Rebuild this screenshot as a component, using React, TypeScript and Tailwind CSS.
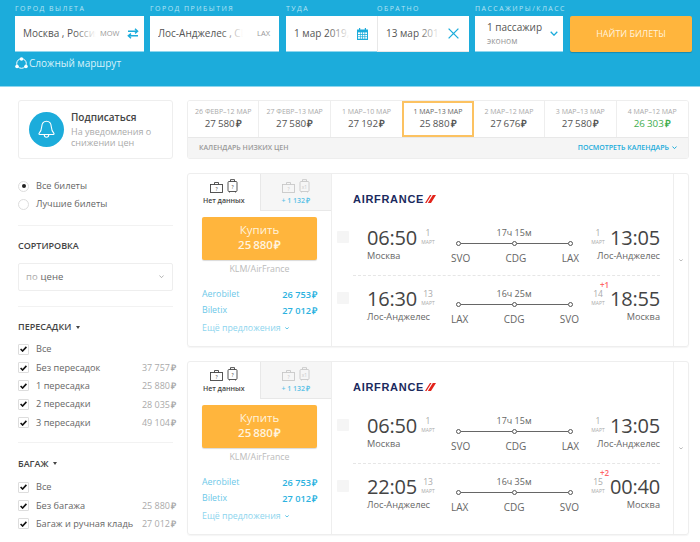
import React from "react";

const Fade = () => <span className="absolute right-0 top-0 bottom-0 w-[22px] bg-gradient-to-r from-white/0 to-white" />;

const Field = ({ label, w, children, className = "", inner = "" }: { label: string; w: string; children: React.ReactNode; className?: string; inner?: string }) => (
  <div className={`flex flex-col ${w} ${className}`}>
    <div className="h-[16px] text-[7px] leading-[17px] tracking-[1.45px] text-[#b5e3f3] whitespace-nowrap">{label}</div>
    <div className={`h-[36px] bg-white border-b border-[#8fd6ee] flex items-center relative ${inner}`}>{children}</div>
  </div>
);

const Swap = () => (
  <svg width="12" height="11" viewBox="0 0 12 11" fill="none" stroke="#1cacdb" strokeWidth="1.4">
    <path d="M1 3.2h9.5M8 .8l2.6 2.4L8 5.4" />
    <path d="M11 7.8H1.500M4 5.600 1.300 7.800 4 10.200" />
  </svg>
);

const Cal = () => (
  <svg width="11" height="12" viewBox="0 0 11 12" fill="#1cacdb">
    <path d="M2 0h1.2v1.5H7.8V0H9v1.5h2V12H0V1.5h2z" />
    <g fill="#fff">
      <rect x="1" y="4.400" width="2" height="1.600" /><rect x="3.600" y="4.400" width="1.600" height="1.600" /><rect x="5.900" y="4.400" width="1.600" height="1.600" /><rect x="8.200" y="4.400" width="1.800" height="1.600" />
      <rect x="1" y="6.800" width="2" height="1.600" /><rect x="3.600" y="6.800" width="1.600" height="1.600" /><rect x="5.900" y="6.800" width="1.600" height="1.600" /><rect x="8.200" y="6.800" width="1.800" height="1.600" />
      <rect x="1" y="9.100" width="2" height="1.600" /><rect x="3.600" y="9.100" width="1.600" height="1.600" /><rect x="5.900" y="9.100" width="1.600" height="1.600" /><rect x="8.200" y="9.100" width="1.800" height="1.600" />
    </g>
  </svg>
);

const Chevron = ({ w = 8, color = "#1cacdb", sw = 1.3 }: { w?: number; color?: string; sw?: number }) => (
  <svg width={w} height={w * 0.65} viewBox="0 0 8 5.2" fill="none" stroke={color} strokeWidth={sw}><path d="M.7.8 4 4.200 7.300.8" /></svg>
);

const Header = () => (
  <div className="h-[87px] bg-[#1cacdb] border-b border-[#8fd6ee] pl-[15px]">
    <div className="flex">
      <Field label="ГОРОД ВЫЛЕТА" w="w-[129px]" className="mr-[6px]">
        <div className="relative w-[73px] ml-[8px] overflow-hidden whitespace-nowrap text-[10px] text-[#555]">Москва , Россия<Fade /></div>
        <span className="text-[7.500px] text-[#999] ml-[4px] w-[20px]">MOW</span>
        <span className="ml-[7px]"><Swap /></span>
      </Field>
      <Field label="ГОРОД ПРИБЫТИЯ" w="w-[129px]" className="mr-[7px]">
        <div className="relative w-[85px] ml-[8px] overflow-hidden whitespace-nowrap text-[10px] text-[#555]">Лос-Анджелес , США<Fade /></div>
        <span className="text-[7.500px] text-[#999] ml-[14px]">LAX</span>
      </Field>
      <Field label="ТУДА" w="w-[91px]">
        <div className="relative w-[56px] ml-[8px] overflow-hidden whitespace-nowrap text-[10px] text-[#555]">1 мар 2019, пт<Fade /></div>
        <span className="ml-[7px]"><Cal /></span>
      </Field>
      <Field label="ОБРАТНО" w="w-[92px]" className="mr-[6px]" inner="border-l border-[#e8e8e8]">
        <div className="relative w-[54px] ml-[8px] overflow-hidden whitespace-nowrap text-[10px] text-[#555]">13 мар 2019, ср<Fade /></div>
        <svg className="ml-[8px]" width="11" height="11" viewBox="0 0 11 11" fill="none" stroke="#1cacdb" strokeWidth="1.3"><path d="m.6.6 9.8 9.8M10.400.6.6 10.400" /></svg>
      </Field>
      <Field label="ПАССАЖИРЫ/КЛАСС" w="w-[88px]" className="mr-[7px]">
        <div className="ml-[12px] flex flex-col">
          <span className="text-[10px] leading-[14px] text-[#555] whitespace-nowrap">1 пассажир</span>
          <span className="text-[8.500px] leading-[14px] text-[#999]">эконом</span>
        </div>
        <span className="ml-auto mr-[5px]"><Chevron /></span>
      </Field>
      <div className="pt-[16px]">
        <div className="w-[122px] h-[36px] rounded-[2px] bg-[#ffb53d] shadow-[0_1px_1px_rgba(0,0,0,0.2)] flex items-center justify-center text-[9px] text-[#fff3de]">НАЙТИ БИЛЕТЫ</div>
      </div>
    </div>
    <div className="flex items-center mt-[3px] text-[10px] leading-[16px] text-[#d9f2fa] whitespace-nowrap">
      <svg width="13" height="12" viewBox="0 0 13 12" fill="none" stroke="#fff" className="mr-[1px]">
        <circle cx="6.500" cy="6.500" r="4.800" strokeWidth="1" />
        <circle cx="6.500" cy="2" r="1.800" fill="#fff" stroke="none" /><circle cx="2" cy="9.500" r="1.800" fill="#fff" stroke="none" /><circle cx="11" cy="9.500" r="1.800" fill="#fff" stroke="none" />
      </svg>
      Сложный маршрут
    </div>
  </div>
);

const Rub = ({ className = "" }: { className?: string }) => <span className={`font-semibold ml-[1px] ${className}`}>₽</span>;

const cells = [
  ["26 ФЕВР–12 МАР", "27 580"],
  ["27 ФЕВР–13 МАР", "27 580"],
  ["1 МАР–10 МАР", "27 192"],
  ["1 МАР–13 МАР", "25 880"],
  ["2 МАР–12 МАР", "27 676"],
  ["3 МАР–13 МАР", "27 580"],
  ["4 МАР–12 МАР", "26 303"],
];

const Calendar = () => (
  <div className="w-[502px] h-[59px] border border-[#eeeeee] rounded-[3px] overflow-hidden flex flex-col">
    <div className="h-[36px] flex bg-white">
      {cells.map(([d, p], i) => (
        <div key={i} className={`w-[71.430px] shrink-0 h-full flex flex-col items-center ${i === 3 ? "border-2 border-[#fcc261] pt-[4px]" : i < 6 && i !== 2 ? "border-r border-[#eeeeee] pt-[6px]" : "pt-[6px]"}`}>
          <span className={`text-[7px] leading-[10px] whitespace-nowrap ${i === 3 ? "text-[#666]" : "text-[#aaa]"}`}>{d}</span>
          <span className={`text-[9.800px] leading-[13px] whitespace-nowrap [word-spacing:-0.5px] ${i === 6 ? "text-[#3fae4f]" : "text-[#555]"}`}>{p}<Rub /></span>
        </div>
      ))}
    </div>
    <div className="flex-1 bg-[#f5f5f5] border-t border-[#e8e8e8] flex items-center justify-between px-[11px] text-[7px] font-semibold">
      <span className="text-[#999]">КАЛЕНДАРЬ НИЗКИХ ЦЕН</span>
      <span className="text-[#1cacdb] flex items-center gap-[3px]">ПОСМОТРЕТЬ КАЛЕНДАРЬ <Chevron w={5} sw={1.6} /></span>
    </div>
  </div>
);

const Radio = ({ on, label }: { on?: boolean; label: string }) => (
  <div className="flex items-center h-[18px]">
    <span className="w-[11px] h-[11px] rounded-full border border-[#ddd] flex items-center justify-center mr-[7px]">
      {on && <span className="w-[4px] h-[4px] rounded-full bg-[#222]" />}
    </span>
    <span className="text-[9.200px] text-[#666]">{label}</span>
  </div>
);

const Check = ({ label, price }: { label: string; price?: string }) => (
  <div className="flex items-center h-[18.400px] w-[158px] whitespace-nowrap">
    <span className="w-[11px] h-[11px] rounded-[1px] border border-[#ddd] flex items-center justify-center mr-[7px]">
      <svg width="7" height="6" viewBox="0 0 7 6" fill="none" stroke="#111" strokeWidth="1.6"><path d="M.6 3 2.600 5 6.400.9" /></svg>
    </span>
    <span className="text-[9.200px] text-[#666]">{label}</span>
    {price && <span className="ml-auto text-[9px] text-[#aaa]">{price}<Rub className="font-normal" /></span>}
  </div>
);

const SecTitle = ({ children }: { children: React.ReactNode }) => (
  <div className="flex items-center text-[9px] font-semibold text-[#444] h-[14px]">{children}</div>
);

const Tri = () => <span className="ml-[5px] w-0 h-0 border-l-[2.500px] border-r-[2.500px] border-t-[3px] border-l-transparent border-r-transparent border-t-[#444]" />;

const Sidebar = () => (
  <div className="w-[155px] flex flex-col">
    <div className="h-[59px] border border-[#eeeeee] rounded-[3px] flex items-center pl-[10px]">
      <span className="w-[35px] h-[35px] rounded-full bg-[#1cacdb] flex items-center justify-center mr-[7px] shrink-0">
        <svg width="17" height="19" viewBox="0 0 17 19" fill="none" stroke="#fff" strokeWidth="1.1">
          <path d="M8.500 1.200c3.200 0 4.600 2.500 4.800 5.500.2 3 .9 4.800 2.600 6.600.4.5.1 1.200-.5 1.200H1.600c-.6 0-.9-.7-.5-1.200 1.700-1.800 2.400-3.600 2.600-6.600.2-3 1.600-5.500 4.800-5.500Z" />
          <path d="M6.300 15c0 3 4.400 3 4.400 0" />
        </svg>
      </span>
      <div className="flex flex-col">
        <span className="text-[10px] leading-[13px] font-semibold text-[#444]">Подписаться</span>
        <span className="text-[9px] leading-[11px] text-[#aaa] mt-[2px] whitespace-nowrap">На уведомления о<br />снижении цен</span>
      </div>
    </div>
    <div className="mt-[18px]">
      <Radio on label="Все билеты" />
      <Radio label="Лучшие билеты" />
    </div>
    <div className="h-px bg-[#f2f2f2] mt-[12px]" />
    <div className="mt-[13px]"><SecTitle>СОРТИРОВКА</SecTitle></div>
    <div className="mt-[10px] h-[28px] border border-[#eeeeee] rounded-[2px] flex items-center pl-[7px] pr-[8px] text-[9.500px]">
      <span className="text-[#aaa] mr-[3px]">по</span><span className="text-[#666]">цене</span>
      <span className="ml-auto"><Chevron w={5} color="#888" sw={1} /></span>
    </div>
    <div className="h-px bg-[#f2f2f2] mt-[15px]" />
    <div className="mt-[13px]"><SecTitle>ПЕРЕСАДКИ<Tri /></SecTitle></div>
    <div className="mt-[6px]">
      <Check label="Все" />
      <Check label="Без пересадок" price="37 757" />
      <Check label="1 пересадка" price="25 880" />
      <Check label="2 пересадки" price="28 035" />
      <Check label="3 пересадки" price="49 104" />
    </div>
    <div className="h-px bg-[#f2f2f2] mt-[10px]" />
    <div className="mt-[14px]"><SecTitle>БАГАЖ<Tri /></SecTitle></div>
    <div className="mt-[7px]">
      <Check label="Все" />
      <Check label="Без багажа" price="25 880" />
      <Check label="Багаж и ручная кладь" price="27 012" />
    </div>
  </div>
);

const Bag = ({ c, t }: { c: string; t: string }) => (
  <svg width="13" height="11" viewBox="0 0 13 11" fill="none" stroke={c} strokeWidth="0.9">
    <rect x=".5" y="2.500" width="12" height="8" />
    <path d="M4.500 2.500V.5h4v2" />
    <text x="6.500" y="8.800" fontSize="5" fontFamily="Open Sans" textAnchor="middle" fill={c} stroke="none">{t}</text>
  </svg>
);

const Case = ({ c, t }: { c: string; t: string }) => (
  <svg width="11" height="14" viewBox="0 0 11 14" fill="none" stroke={c} strokeWidth="0.9">
    <rect x="1" y="2.500" width="9" height="10" rx="1" />
    <path d="M3.500 2.500V.6h4v1.900M2.500 12.500v1M8.500 12.500v1" />
    <text x="5.500" y="9.500" fontSize="5" fontFamily="Open Sans" textAnchor="middle" fill={c} stroke="none">{t}</text>
  </svg>
);

const Tabs = () => (
  <div className="h-[37px] flex">
    <div className="w-[72px] flex flex-col items-center pt-[5px]">
      <div className="flex items-end gap-[4px]"><Bag c="#444" t="?" /><Case c="#444" t="?" /></div>
      <span className="text-[7px] font-semibold text-[#444] leading-[10px] mt-[3px]">Нет данных</span>
    </div>
    <div className="w-[72px] flex flex-col items-center pt-[5px] bg-[#f6f6f6] border-l border-b border-[#e8e8e8]">
      <div className="flex items-end gap-[4px]"><Bag c="#c8c8c8" t="?" /><Case c="#c8c8c8" t="x1" /></div>
      <span className="text-[7px] font-semibold text-[#5cc2e6] leading-[10px] mt-[3px]">+ 1 132<Rub /></span>
    </div>
  </div>
);

const Offer = ({ name, price }: { name: string; price: string }) => (
  <div className="flex justify-between h-[16px] items-center text-[8.800px]">
    <span className="text-[#6cc8e8]">{name}</span>
    <span className="text-[#2bb2df] font-semibold text-[9.200px]">{price}<Rub /></span>
  </div>
);

const Buy = () => (
  <div className="w-[144px] border-r border-[#eeeeee] flex flex-col shrink-0">
    <Tabs />
    <div className="px-[14px] pt-[6px] flex flex-col">
      <div className="h-[43px] pb-[3px] rounded-[2px] bg-[#ffb53d] flex flex-col items-center justify-center text-[#fff3de] shadow-[0_1px_1px_rgba(0,0,0,0.15)]">
        <span className="text-[11.500px] leading-[15px]">Купить</span>
        <span className="text-[11.500px] leading-[15px] font-semibold [word-spacing:-1px]">25 880<Rub /></span>
      </div>
      <div className="text-center text-[8.800px] leading-[12px] text-[#bbb] mt-[3px]">KLM/AirFrance</div>
      <div className="mt-[12px]">
        <Offer name="Aerobilet" price="26 753" />
        <Offer name="Biletix" price="27 012" />
      </div>
      <div className="mt-[1px] text-[8.800px] leading-[16px] text-[#8dd5ee] flex items-center gap-[4px] whitespace-nowrap">Ещё предложения <Chevron w={4} sw={1.500} /></div>
    </div>
  </div>
);

const Dot = () => <span className="w-[5px] h-[5px] rounded-full border border-[#555] bg-white shrink-0" />;
const Line = () => <span className="flex-1 h-px bg-[#666]" />;

type Leg = { dep: string; depD: string; depC: string; dur: string; codes: string[]; arr: string; arrD: string; arrC: string; plus?: string };

const Row = ({ l }: { l: Leg }) => (
  <div className="flex h-[49px] items-start whitespace-nowrap">
    <span className="w-[12px] h-[12px] bg-[#f5f5f5] rounded-[1px] mt-[5px] shrink-0" />
    <div className="ml-[18px] w-[84px] shrink-0">
      <div className="flex items-start h-[23px]">
        <span className="text-[20px] leading-[22px] mt-[1px] tracking-[-0.2px] text-[#444]">{l.dep}</span>
        <span className="ml-[3px] flex flex-col items-center w-[16px] text-[#aaa]">
          <span className="text-[8.500px] leading-[11px] mt-[1px]">{l.depD}</span>
          <span className="text-[5px] leading-[8px]">МАРТ</span>
        </span>
      </div>
      <div className="text-[9.200px] leading-[13px] text-[#666]">{l.depC}</div>
    </div>
    <div className="w-[128px] shrink-0 flex flex-col pt-[1px]">
      <div className="text-[9px] leading-[12px] text-[#666] text-center w-[126px]">{l.dur}</div>
      <div className="flex items-center w-[117px] ml-[5px] mt-[1px] h-[6px]"><Dot /><Line /><Dot /><Line /><Dot /></div>
      <div className="flex justify-between w-[128px] text-[10px] leading-[13px] text-[#666] mt-[6px]">
        {l.codes.map((c) => <span key={c}>{c}</span>)}
      </div>
    </div>
    <div className="ml-auto w-[70px] flex flex-col items-end shrink-0 mr-[13px]">
      <div className="flex items-start h-[23px]">
        <span className="flex flex-col items-center w-[16px] text-[#aaa] mr-[4px] relative">
          {l.plus && <span className="absolute -top-[7px] left-[10px] text-[8px] leading-[10px] font-semibold text-[#f66]">{l.plus}</span>}
          <span className="text-[8.500px] leading-[11px] mt-[1px]">{l.arrD}</span>
          <span className="text-[5px] leading-[8px]">МАРТ</span>
        </span>
        <span className="text-[20px] leading-[22px] mt-[1px] tracking-[-0.2px] text-[#444]">{l.arr}</span>
      </div>
      <div className="text-[9.200px] leading-[13px] text-[#666]">{l.arrC}</div>
    </div>
  </div>
);

const Ticket = ({ a, b }: { a: Leg; b: Leg }) => (
  <div className="w-[502px] h-[174px] border border-[#eeeeee] rounded-[3px] flex shadow-[0_1px_1px_rgba(0,0,0,0.04)]">
    <Buy />
    <div className="flex-1 flex flex-col pl-[5px]">
      <div className="h-[52px] pl-[16px] pt-[19px] flex items-start">
        <span className="font-['Liberation_Sans'] font-bold text-[11px] leading-[13px] tracking-[0.7px] text-[#1b2a5e]">AIRFRANCE</span>
        <svg className="ml-[1px] mt-[2px]" width="11" height="8" viewBox="0 0 11 8"><path d="M5 0h6L6 8H0Z" fill="#e2231a" /><path d="M6.500 0h1.300L2.800 8H1.500z" fill="#fff" /></svg>
      </div>
      <Row l={a} />
      <div className="border-t border-dashed border-[#e6e6e6] ml-[16px] w-[307px]" />
      <div className="pt-[11px]"><Row l={b} /></div>
    </div>
    <div className="w-[15px] border-l border-[#eeeeee] flex items-center justify-center shrink-0"><Chevron w={4} color="#888" sw={1.2} /></div>
  </div>
);

const out = { dep: "06:50", depD: "1", depC: "Москва", dur: "17ч 15м", codes: ["SVO", "CDG", "LAX"], arr: "13:05", arrD: "1", arrC: "Лос-Анджелес" };

export default function App() {
  return (
    <div className="w-[700px] h-[542px] overflow-hidden bg-white font-['Open_Sans',sans-serif]">
      <Header />
      <div className="flex pl-[18px] pt-[13px]">
        <Sidebar />
        <div className="ml-[14px] flex flex-col">
          <Calendar />
          <div className="mt-[14px]">
            <Ticket a={out} b={{ dep: "16:30", depD: "13", depC: "Лос-Анджелес", dur: "16ч 25м", codes: ["LAX", "CDG", "SVO"], arr: "18:55", arrD: "14", arrC: "Москва", plus: "+1" }} />
          </div>
          <div className="mt-[14px]">
            <Ticket a={out} b={{ dep: "22:05", depD: "13", depC: "Лос-Анджелес", dur: "16ч 35м", codes: ["LAX", "CDG", "SVO"], arr: "00:40", arrD: "15", arrC: "Москва", plus: "+2" }} />
          </div>
        </div>
      </div>
    </div>
  );
}
